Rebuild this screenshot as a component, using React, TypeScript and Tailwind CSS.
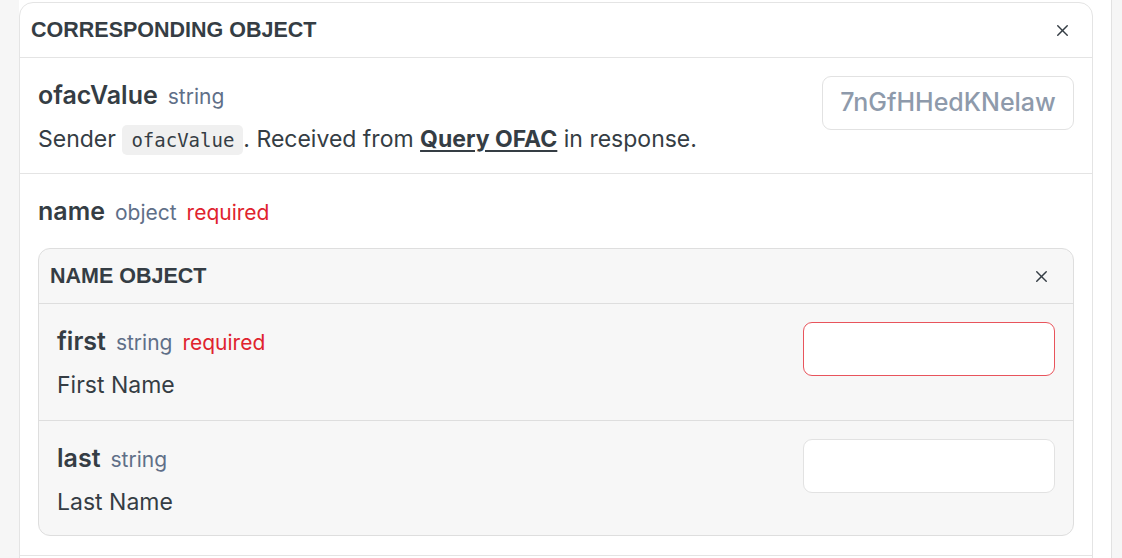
import { X } from 'lucide-react'

const font = { fontFamily: 'Inter, "Noto Sans", sans-serif' }
const headFont = { fontFamily: '"Liberation Sans", Arial, sans-serif' }

function Label({ name, type, required }: { name: string; type: string; required?: boolean }) {
    return (
        <div className="flex h-[40px] items-center gap-[10px]">
            <span className="text-[25px] font-semibold text-[#353d44]">{name}</span>
            <span className="mt-[2px] text-[21px] text-[#5f6f88]">{type}</span>
            {required && <span className="mt-[2px] text-[21px] text-[#e0232e]">required</span>}
        </div>
    )
}

function Field({
    name,
    type,
    required,
    description,
    input,
}: {
    name: string
    type: string
    required?: boolean
    description: React.ReactNode
    input: React.ReactNode
}) {
    return (
        <div className="flex items-start justify-between">
            <div>
                <Label name={name} type={type} required={required} />
                <div className="mt-[6px] text-[23px] leading-[34px] text-[#353d44]">{description}</div>
            </div>
            {input}
        </div>
    )
}

export default function App() {
    return (
        <div className="flex h-[558px] w-[1122px] overflow-hidden bg-[#f6f6f6]" style={font}>
            <div className="ml-[19px] flex h-full w-[1093px] border-r border-[#e2e2e2] bg-white pt-[2px]">
                <div className="h-[600px] w-[1074px] rounded-t-[14px] border border-[#e4e4e4] bg-white">
                    {/* Outer header */}
                    <div className="flex h-[55px] items-center justify-between border-b border-[#e4e4e4] pl-[11px] pr-[20px]">
                        <h2 className="text-[21.5px] font-bold uppercase text-[#353d44]" style={headFont}>
                            Corresponding Object
                        </h2>
                        <X className="h-[19px] w-[19px] text-[#353d44]" strokeWidth={1.8} />
                    </div>

                    {/* ofacValue */}
                    <div className="h-[116px] border-b border-[#e4e4e4] pl-[18px] pr-[18px] pt-[18px]">
                        <Field
                            name="ofacValue"
                            type="string"
                            description={
                                <span>
                                    Sender{' '}
                                    <code
                                        className="rounded-[5px] bg-[#f0f0f0] px-[9px] py-[4px] text-[19px] text-[#353d44]"
                                        style={{ fontFamily: '"DejaVu Sans Mono", "Liberation Mono", monospace' }}
                                    >
                                        ofacValue
                                    </code>
                                    . Received from{' '}
                                    <a className="font-bold underline underline-offset-[3px]">Query OFAC</a> in response.
                                </span>
                            }
                            input={
                                <div className="flex h-[54px] w-[252px] items-center justify-center rounded-[9px] border border-[#e2e2e2] text-[25px] font-medium text-[#8e9aab]">
                                    7nGfHHedKNelaw
                                </div>
                            }
                        />
                    </div>

                    {/* name object */}
                    <div className="border-b border-[#e4e4e4] pl-[18px] pr-[18px] pt-[18px] pb-[19px]">
                        <Label name="name" type="object" required />

                        <div className="mt-[16px] overflow-hidden rounded-[12px] border border-[#dedede] bg-[#f7f7f7]">
                            <div className="flex h-[55px] items-center justify-between border-b border-[#dedede] pl-[11px] pr-[22px]">
                                <h3 className="text-[21.5px] font-bold uppercase text-[#353d44]" style={headFont}>
                                    Name Object
                                </h3>
                                <X className="h-[19px] w-[19px] text-[#353d44]" strokeWidth={1.8} />
                            </div>
                            <div className="h-[117px] border-b border-[#dedede] pl-[18px] pr-[18px] pt-[18px]">
                                <Field
                                    name="first"
                                    type="string"
                                    required
                                    description="First Name"
                                    input={
                                        <input className="h-[54px] w-[252px] rounded-[9px] border border-[#e8545c] bg-white outline-none" />
                                    }
                                />
                            </div>
                            <div className="h-[114px] pl-[18px] pr-[18px] pt-[18px]">
                                <Field
                                    name="last"
                                    type="string"
                                    description="Last Name"
                                    input={
                                        <input className="h-[54px] w-[252px] rounded-[9px] border border-[#e2e2e2] bg-white outline-none" />
                                    }
                                />
                            </div>
                        </div>
                    </div>
                </div>
            </div>
        </div>
    )
}
